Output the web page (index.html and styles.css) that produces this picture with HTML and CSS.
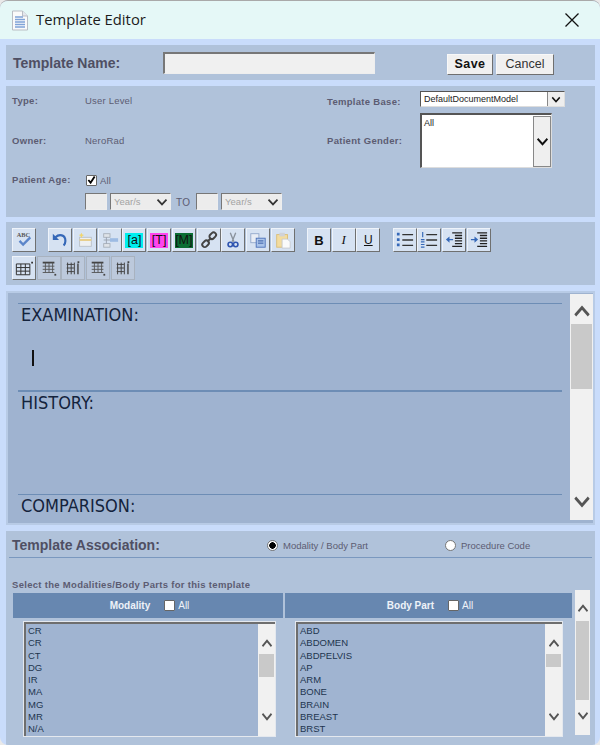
FILE: index.html
```html
<!DOCTYPE html>
<html lang="en">
<head>
<meta charset="UTF-8" />
<title>Template Editor</title>
<link rel="stylesheet" href="styles.css">
</head>
<body>

<svg class="defs" width="0" height="0">
  <symbol id="chev-down" viewBox="0 0 16 10" preserveAspectRatio="none"><path d="M2 2l6 6 6-6" fill="none" stroke="currentColor" stroke-width="2.4"/></symbol>
  <symbol id="chev-up" viewBox="0 0 16 10" preserveAspectRatio="none"><path d="M2 8l6-6 6 6" fill="none" stroke="currentColor" stroke-width="2.4"/></symbol>
  <symbol id="grid-rows" viewBox="0 0 20 20"><path d="M3 4h13" stroke="#444" stroke-width="2"/><path d="M3 8h13M3 11.500h13M3 15h13M6 4v11M10 4v11M14 4v11" fill="none" stroke="#555" stroke-width="1"/><path d="M16 16.500h2v2h-2z" fill="#444"/></symbol>
  <symbol id="grid-cols" viewBox="0 0 20 20"><path d="M3 6h8M3 10h8M3 14h8M4 4v13M8 4v13M11.500 4v13" fill="none" stroke="#444" stroke-width="1.100"/><path d="M15.500 5v12" stroke="#444" stroke-width="1.600"/><path d="M15 2.500h2v2h-2z" fill="#444"/></symbol>
</svg>

<div id="window">
  <div id="titlebar">
    <svg class="doc-icon" width="18" height="21" viewBox="0 0 18 21">
      <path d="M1.500 1h10l5 5v14h-15z" fill="#fafafa" stroke="#b9bdc4"/>
      <path d="M11.500 1v5h5" fill="#e4e7ee" stroke="#b9bdc4"/>
      <path d="M4 7h8M4 9.500h10M4 12h10M4 14.500h10M4 17h10" stroke="#7fa3d8" stroke-width="1.400"/>
    </svg>
    <span class="title">Template Editor</span>
    <svg class="close-icon" width="14" height="14" viewBox="0 0 14 14"><path d="M0.500 0.500l13 13M13.500 0.500l-13 13" stroke="#111" stroke-width="1.300"/></svg>
  </div>

  <div id="content">
    <div class="panel name-panel">
      <span class="name-label">Template Name:</span>
      <input class="name-input" type="text">
      <button class="btn btn-save">Save</button>
      <button class="btn">Cancel</button>
    </div>

    <div class="panel info-panel">
      <div class="info-col">
        <div class="info-row row-type"><span class="lbl">Type:</span><span class="val">User Level</span></div>
        <div class="info-row row-owner"><span class="lbl">Owner:</span><span class="val">NeroRad</span></div>
        <div class="info-row row-age">
          <span class="lbl">Patient Age:</span>
          <div class="age-box">
            <div class="age-all"><span class="check checked"><svg width="10" height="10" viewBox="0 0 10 10"><path d="M1.500 5l2.500 3 4.500-7" fill="none" stroke="#000" stroke-width="2"/></svg></span><span class="val">All</span></div>
            <div class="age-range">
              <span class="mini-input"></span>
              <span class="unit">Year/s<svg width="12" height="8"><use href="#chev-down"/></svg></span>
              <span class="val to">TO</span>
              <span class="mini-input"></span>
              <span class="unit">Year/s<svg width="12" height="8"><use href="#chev-down"/></svg></span>
            </div>
          </div>
        </div>
      </div>
      <div class="info-col right-col">
        <div class="info-row row-base">
          <span class="lbl">Template Base:</span>
          <span class="base-select">DefaultDocumentModel<span class="base-arrow"><svg width="10" height="7"><use href="#chev-down"/></svg></span></span>
        </div>
        <div class="info-row row-gender">
          <span class="lbl">Patient Gender:</span>
          <span class="gender-box">All<span class="gender-arrow"><svg width="13" height="9"><use href="#chev-down"/></svg></span></span>
        </div>
      </div>
    </div>

    <div class="panel toolbar-panel">
      <div class="tool-row">
        <span class="tool raised">
          <svg viewBox="0 0 20 20"><text x="2" y="7" class="abc">ABC</text><path d="M5 11l4 4 8-8" fill="none" stroke="#5b85c9" stroke-width="2.600"/></svg>
        </span>
        <span class="tool-gap"></span>
        <span class="tool raised">
          <svg viewBox="0 0 20 20"><path d="M5 7c4-4 11-3 11 4 0 2-1 4-2 5" fill="none" stroke="#3568b8" stroke-width="2.400"/><path d="M2 3v7h7z" fill="#3568b8"/></svg>
        </span>
        <span class="tool raised">
          <svg viewBox="0 0 20 20"><rect x="4" y="7" width="13" height="10" fill="#eef0f2" stroke="#b9c0c8"/><path d="M4 10h13" stroke="#e8cf8e" stroke-width="2"/><path d="M6 2l1 2 2 .5-2 1L6 8 5 5.500l-2-1 2-.5z" fill="#f2d66e"/></svg>
        </span>
        <span class="tool raised">
          <svg viewBox="0 0 20 20"><rect x="3" y="3" width="7" height="4" fill="#dfe3e8" stroke="#a6afb9"/><rect x="3" y="14" width="7" height="4" fill="#dfe3e8" stroke="#a6afb9"/><rect x="10" y="8" width="9" height="4" fill="#9dbbe3"/><path d="M6 7v7M3 10h7" stroke="#98a2ae"/></svg>
        </span>
        <span class="tool raised"><span class="tag tag-a">[a]</span></span>
        <span class="tool raised"><span class="tag tag-t">[T]</span></span>
        <span class="tool raised"><span class="tag tag-m">[M]</span></span>
        <span class="tool raised">
          <svg viewBox="0 0 20 20"><g fill="none" stroke="#444" stroke-width="2.200"><rect x="10" y="2.500" width="8" height="5.500" rx="2.700" transform="rotate(-45 14 5)"/><rect x="2" y="11.500" width="8" height="5.500" rx="2.700" transform="rotate(-45 6 14)"/><path d="M8 12l4-4"/></g></svg>
        </span>
        <span class="tool raised">
          <svg viewBox="0 0 20 20"><path d="M7 2l4 10M13 2l-4 10" stroke="#8a929c" stroke-width="1.500"/><circle cx="7" cy="15" r="2.500" fill="none" stroke="#2f55b0" stroke-width="1.800"/><circle cx="13" cy="15" r="2.500" fill="none" stroke="#2f55b0" stroke-width="1.800"/></svg>
        </span>
        <span class="tool raised">
          <svg viewBox="0 0 20 20"><rect x="2" y="3" width="9" height="10" fill="#e8edf5" stroke="#93a8cb"/><rect x="8" y="8" width="10" height="10" fill="#a9c3ea" stroke="#4a70b8"/><path d="M10 11h6M10 13.500h6" stroke="#2f55a0"/></svg>
        </span>
        <span class="tool raised">
          <svg viewBox="0 0 20 20"><rect x="3" y="4" width="12" height="14" fill="#f3dc9f" stroke="#d9bd78"/><rect x="6" y="2" width="6" height="4" fill="#cfd2d8"/><path d="M9 9h6l3 3v7H9z" fill="#fafafa" stroke="#c6cad0"/></svg>
        </span>
        <span class="tool-gap"></span>
        <span class="tool raised fmt bold">B</span>
        <span class="tool raised fmt italic">I</span>
        <span class="tool raised fmt under">U</span>
        <span class="tool-gap"></span>
        <span class="tool raised">
          <svg viewBox="0 0 20 20"><path d="M1 3.500h3M1 9.500h3M1 15.500h3" stroke="#3568b8" stroke-width="3"/><path d="M7 4h12M7 10h12M7 16h12" stroke="#333" stroke-width="1.500"/></svg>
        </span>
        <span class="tool raised">
          <svg viewBox="0 0 20 20"><path d="M3 1v6M1 9.500h4M1 12h4M1 15h4M1 18h4" stroke="#3568b8" stroke-width="1.300"/><path d="M7 4h12M7 10h12M7 16h12" stroke="#333" stroke-width="1.500"/></svg>
        </span>
        <span class="tool raised">
          <svg viewBox="0 0 20 20"><path d="M8 2h11M11 5h8M11 8h8M11 11h8M11 14h8M8 17h11" stroke="#222" stroke-width="1.500"/><path d="M1 9.500l4-3.500v7z" fill="#3568b8"/><path d="M4 9.500h5" stroke="#3568b8" stroke-width="1.500"/></svg>
        </span>
        <span class="tool raised">
          <svg viewBox="0 0 20 20"><path d="M8 2h11M11 5h8M11 8h8M11 11h8M11 14h8M8 17h11" stroke="#222" stroke-width="1.500"/><path d="M9 9.500l-4-3.500v7z" fill="#3568b8"/><path d="M1 9.500h5" stroke="#3568b8" stroke-width="1.500"/></svg>
        </span>
      </div>
      <div class="tool-row">
        <span class="tool raised">
          <svg viewBox="0 0 20 20"><path d="M1.500 5.500h15v12h-15zM1.500 9.500h15M1.500 13.500h15M6.500 5.500v12M11.500 5.500v12" fill="none" stroke="#333" stroke-width="1.100"/><path d="M18 3h2v2h-2z" fill="#333"/></svg>
        </span>
        <span class="tool flat"><svg><use href="#grid-rows"/></svg></span>
        <span class="tool flat"><svg><use href="#grid-cols"/></svg></span>
        <span class="tool flat"><svg><use href="#grid-rows"/></svg></span>
        <span class="tool flat"><svg><use href="#grid-cols"/></svg></span>
      </div>
    </div>

    <div class="panel editor-panel">
      <div class="editor">
        <div class="section sec-exam"><div class="sec-title">EXAMINATION:</div><span class="caret"></span></div>
        <div class="section sec-history"><div class="sec-title">HISTORY:</div></div>
        <div class="section sec-compare"><div class="sec-title">COMPARISON:</div></div>
      </div>
      <div class="scroll scroll-editor">
        <svg class="arrow" width="18" height="13"><use href="#chev-up"/></svg>
        <div class="track"><div class="thumb"></div></div>
        <svg class="arrow" width="18" height="13"><use href="#chev-down"/></svg>
      </div>
    </div>

    <div class="panel assoc-panel">
      <div class="assoc-head">
        <span class="assoc-title">Template Association:</span>
        <span class="radio-item item-mod"><span class="radio on"></span>Modality / Body Part</span>
        <span class="radio-item item-proc"><span class="radio"></span>Procedure Code</span>
      </div>
      <div class="assoc-body">
        <div class="assoc-main">
          <div class="assoc-hint">Select the Modalities/Body Parts for this template</div>
          <div class="columns">
            <div class="column col-mod">
              <div class="col-head"><b>Modality</b><span class="check"></span><span>All</span></div>
              <div class="list-box">
                <div class="list-items">
                  <div>CR</div><div>CR</div><div>CT</div><div>DG</div><div>IR</div><div>MA</div><div>MG</div><div>MR</div><div>N/A</div>
                </div>
                <div class="scroll scroll-mod">
                  <svg class="arrow" width="12" height="9"><use href="#chev-up"/></svg>
                  <div class="track"><div class="thumb"></div></div>
                  <svg class="arrow" width="12" height="9"><use href="#chev-down"/></svg>
                </div>
              </div>
            </div>
            <div class="column col-body">
              <div class="col-head"><b>Body Part</b><span class="check"></span><span>All</span></div>
              <div class="list-box">
                <div class="list-items">
                  <div>ABD</div><div>ABDOMEN</div><div>ABDPELVIS</div><div>AP</div><div>ARM</div><div>BONE</div><div>BRAIN</div><div>BREAST</div><div>BRST</div>
                </div>
                <div class="scroll scroll-body">
                  <svg class="arrow" width="12" height="9"><use href="#chev-up"/></svg>
                  <div class="track"><div class="thumb"></div></div>
                  <svg class="arrow" width="12" height="9"><use href="#chev-down"/></svg>
                </div>
              </div>
            </div>
          </div>
        </div>
        <div class="scroll scroll-outer">
          <svg class="arrow" width="12" height="9"><use href="#chev-up"/></svg>
          <div class="track"><div class="thumb"></div></div>
          <svg class="arrow" width="12" height="9"><use href="#chev-down"/></svg>
        </div>
      </div>
    </div>
  </div>
</div>

</body>
</html>
```

FILE: styles.css
```css
html, body {
  margin: 0;
  height: 100%;
  background: #e9e9e9;
  overflow: hidden;
  font-family: 'Liberation Sans', Arial, sans-serif;
}
.defs {
  position: absolute;
}
#window {
  width: 600px;
  height: 745px;
  box-sizing: border-box;
  border-top: 1px solid #a9a9a9;
  border-radius: 8px;
  overflow: hidden;
  background: #c9dcfb;
  display: flex;
  flex-direction: column;
}

/* title bar */
#titlebar {
  height: 38px;
  flex: none;
  background: #e5f8f7;
  display: flex;
  align-items: center;
  padding: 0 21px 0 11px;
}
.doc-icon {
  margin-right: 7px;
}
.title {
  font-family: 'Open Sans', 'Noto Sans', sans-serif;
  font-size: 14.800px;
  color: #1c1c1c;
  flex: 1;
  margin-top: -2px;
}

#content {
  padding: 6px 5px 0 6px;
  display: flex;
  flex-direction: column;
}
.panel {
  background: #b0c2da;
}

/* name row */
.name-panel {
  height: 35px;
  margin-bottom: 6px;
  display: flex;
  align-items: center;
}
.name-label {
  font-size: 14px;
  font-weight: bold;
  color: #4f4f63;
  margin-left: 7px;
  width: 150px;
}
.name-input {
  width: 212px;
  height: 22px;
  box-sizing: border-box;
  margin: 0;
  background: #f0f0f0;
  border: 1px solid;
  border-color: #777 #eee #eee #777;
  border-top-width: 2px;
  border-left-width: 2px;
}
.btn {
  height: 21px;
  box-sizing: border-box;
  margin: 3px 0 0 3px;
  padding: 0;
  width: 58px;
  background: #f0f0f0;
  border: 1px solid;
  border-color: #f8f8f8 #6f6f6f #6f6f6f #f8f8f8;
  font-family: 'Liberation Sans', Arial, sans-serif;
  font-size: 12.500px;
  color: #333;
}
.btn-save {
  margin-left: 72px;
  width: 46px;
  font-weight: bold;
  letter-spacing: 0.400px;
  color: #111;
}

/* type / owner / age block */
.info-panel {
  height: 131px;
  margin-bottom: 5px;
  display: flex;
  font-size: 9.500px;
  color: #5c5c72;
}
.info-col {
  width: 321px;
  padding-left: 6px;
  box-sizing: border-box;
}
.info-row {
  display: flex;
}
.lbl {
  font-weight: bold;
  width: 73px;
  flex: none;
  letter-spacing: 0.300px;
}
.val {
  letter-spacing: 0.200px;
}
.row-type {
  padding-top: 9px;
  height: 40px;
}
.row-owner {
  height: 36px;
}
.row-age .lbl {
  padding-top: 3px;
}
.age-all {
  display: flex;
  align-items: center;
  height: 14px;
  margin-left: 1px;
  padding-top: 2px;
}
.check {
  width: 9px;
  height: 9px;
  background: #fff;
  border: 1px solid #666;
  border-radius: 1px;
  display: inline-flex;
  align-items: center;
  justify-content: center;
  margin-right: 3px;
  flex: none;
}
.age-range {
  display: flex;
  align-items: center;
  margin-top: 6px;
}
.mini-input {
  width: 20px;
  height: 15px;
  background: #ececec;
  border: 1px solid;
  border-color: #777 #eee #eee #777;
  margin-right: 3px;
}
.unit {
  width: 54px;
  height: 15px;
  background: #ececec;
  border: 1px solid;
  border-color: #777 #eee #eee #777;
  font-size: 9.500px;
  line-height: 15px;
  padding: 0 2px 0 3px;
  display: flex;
  justify-content: space-between;
  align-items: center;
  color: #a3a3a3;
}
.unit svg {
  color: #333;
}
.to {
  font-size: 10px;
  margin: 2px 6px 0 5px;
}
.right-col {
  width: 268px;
  padding-left: 0;
}
.row-base {
  padding-top: 5px;
}
.right-col .lbl {
  width: 93px;
}
.row-base .lbl {
  padding-top: 5px;
}
.base-select {
  width: 145px;
  height: 16px;
  box-sizing: border-box;
  background: #fff;
  border: 1px solid;
  border-color: #555 #ddd #ddd #555;
  color: #222;
  font-size: 9px;
  line-height: 14px;
  padding-left: 3px;
  display: flex;
  justify-content: space-between;
}
.base-arrow {
  width: 16px;
  background: #eee;
  border-left: 1px solid #888;
  display: flex;
  align-items: center;
  justify-content: center;
  color: #111;
}
.row-gender {
  margin-top: 6px;
}
.row-gender .lbl {
  padding-top: 22px;
}
.gender-box {
  width: 132px;
  height: 55px;
  box-sizing: border-box;
  background: #fff;
  border: 1px solid;
  border-color: #555 #ddd #ddd #555;
  border-top-width: 2px;
  border-left-width: 2px;
  color: #222;
  font-size: 9px;
  padding: 3px 0 0 2px;
  display: flex;
  justify-content: space-between;
}
.gender-arrow {
  width: 16px;
  margin-top: -2px;
  background: #efefef;
  border: 1px solid #888;
  display: flex;
  align-items: center;
  justify-content: center;
  color: #111;
}

/* toolbar */
.toolbar-panel {
  height: 63px;
  margin-bottom: 6px;
  padding: 6px 0 0 6px;
  box-sizing: border-box;
}
.tool-row {
  display: flex;
  gap: 0.700px;
  height: 25px;
  margin-bottom: 3px;
}
.tool {
  width: 24px;
  height: 24px;
  box-sizing: border-box;
  display: flex;
  align-items: center;
  justify-content: center;
  flex: none;
}
.tool svg {
  width: 18px;
  height: 18px;
}
.raised {
  background: #d6e2f2;
  border: 1px solid;
  border-color: #eef3fa #6f7070 #6f7070 #eef3fa;
}
.flat {
  background: #bcc9dc;
  border: 1px solid #a8b2bf;
}
.tool-gap {
  width: 11px;
  flex: none;
}
.abc {
  font-family: 'Liberation Serif', serif;
  font-size: 7px;
  font-weight: bold;
  fill: #555;
}
.tag {
  width: 18px;
  height: 15px;
  text-align: center;
  font-family: 'Liberation Sans', Arial, sans-serif;
  font-size: 12.500px;
  line-height: 15px;
  color: #111;
}
.tag-a { background: #00eeee; }
.tag-t { background: #ff44ee; }
.tag-m { background: #0a6e34; }
.fmt {
  font-family: 'Liberation Serif', serif;
  font-size: 13px;
  color: #111;
}
.bold {
  font-family: 'Liberation Sans', Arial, sans-serif;
  font-weight: bold;
  font-size: 13px;
}
.italic {
  font-style: italic;
}
.under {
  font-family: 'Liberation Sans', Arial, sans-serif;
  font-size: 12px;
  text-decoration: underline;
}

/* editor */
.editor-panel {
  height: 234px;
  margin-bottom: 6px;
  box-sizing: border-box;
  background: #9fb3d0;
  border: 2px solid #b8cbe6;
  display: flex;
  overflow: hidden;
}
.editor {
  flex: 1;
  padding: 10px 8px 0 10px;
  overflow: hidden;
}
.section {
  border-top: 1px solid #6d8db5;
  padding-left: 3px;
  font-family: 'DejaVu Sans Condensed', 'Noto Sans', sans-serif;
  font-size: 18px;
  color: #14233c;
}
.sec-title {
  line-height: 22px;
}
.sec-exam {
  height: 86px;
}
.caret {
  display: block;
  width: 2px;
  height: 16px;
  background: #111;
  margin: 24px 0 0 11px;
}
.sec-history {
  height: 102px;
  border-top-width: 2px;
}

/* scrollbars */
.scroll {
  background: #f1f1f1;
  display: flex;
  flex-direction: column;
  align-items: center;
  color: #555;
  flex: none;
}
.scroll .arrow {
  flex: none;
}
.scroll .track {
  flex: 1;
  width: 100%;
  box-sizing: border-box;
}
.scroll .thumb {
  background: #c9c9c9;
}
.scroll-editor {
  width: 23px;
  margin-top: 1px;
  padding: 11px 0 12px;
  height: 226px;
  box-sizing: border-box;
}
.scroll-editor .track {
  padding: 6px 1px 0;
}
.scroll-editor .thumb {
  height: 65px;
}

/* association */
.assoc-panel {
  height: 225px;
}
.assoc-head {
  height: 24px;
  padding-top: 2px;
  margin: 0 3px;
  border-bottom: 1px solid #7a98bf;
  display: flex;
  align-items: center;
}
.assoc-title {
  font-size: 14px;
  font-weight: bold;
  color: #4f4f63;
  margin-left: 3px;
  width: 255px;
}
.radio-item {
  display: flex;
  align-items: center;
  font-size: 9.500px;
  color: #5c5c72;
}
.item-mod {
  width: 178px;
}
.radio {
  width: 9px;
  height: 9px;
  border-radius: 50%;
  background: #fff;
  border: 1px solid #777;
  margin-right: 5px;
}
.radio.on {
  background: radial-gradient(circle, #000 0 3px, #fff 3.500px);
}
.assoc-body {
  display: flex;
  padding: 0 6px 0 7px;
}
.assoc-main {
  width: 559px;
}
.assoc-hint {
  font-size: 9.500px;
  font-weight: bold;
  color: #5c5c72;
  margin: 21px 0 0 -1px;
  line-height: 11px;
  letter-spacing: 0.300px;
}
.columns {
  display: flex;
  gap: 2px;
  margin-top: 3px;
}
.col-mod {
  width: 270px;
}
.col-body {
  width: 287px;
}
.col-head {
  height: 25px;
  padding-left: 3px;
  background: #6787b0;
  display: flex;
  align-items: center;
  justify-content: center;
  font-size: 10px;
  color: #eef2f8;
}
.col-head b {
  margin-right: 14px;
}
.col-head .check {
  margin-right: 3px;
}
.list-box {
  height: 114px;
  margin: 4px 0 0 11px;
  box-sizing: border-box;
  border-top: 2px solid #6e6e6e;
  border-left: 2px solid #6e6e6e;
  outline: 1px solid #e4e8ee;
  background: #a0b4d1;
  display: flex;
}
.col-mod .list-box {
  width: 251px;
}
.col-body .list-box {
  width: 266px;
}
.list-items {
  flex: 1;
  padding: 1px 0 0 2px;
  font-size: 9.500px;
  line-height: 12.300px;
  color: #22344f;
  overflow: hidden;
}
.scroll-mod,
.scroll-body {
  width: 17px;
  padding: 15px 0 15px;
  box-sizing: border-box;
}
.scroll-mod .track,
.scroll-body .track {
  padding: 6px 1px 0;
}
.scroll-mod .thumb {
  height: 23px;
}
.scroll-body .thumb {
  height: 13px;
}
.scroll-outer {
  width: 15px;
  height: 145px;
  margin: 32px 0 0 3px;
  padding: 14px 0 15px;
  box-sizing: border-box;
}
.scroll-outer .track {
  padding: 8px 1px 11px;
}
.scroll-outer .thumb {
  height: 100%;
}
```
